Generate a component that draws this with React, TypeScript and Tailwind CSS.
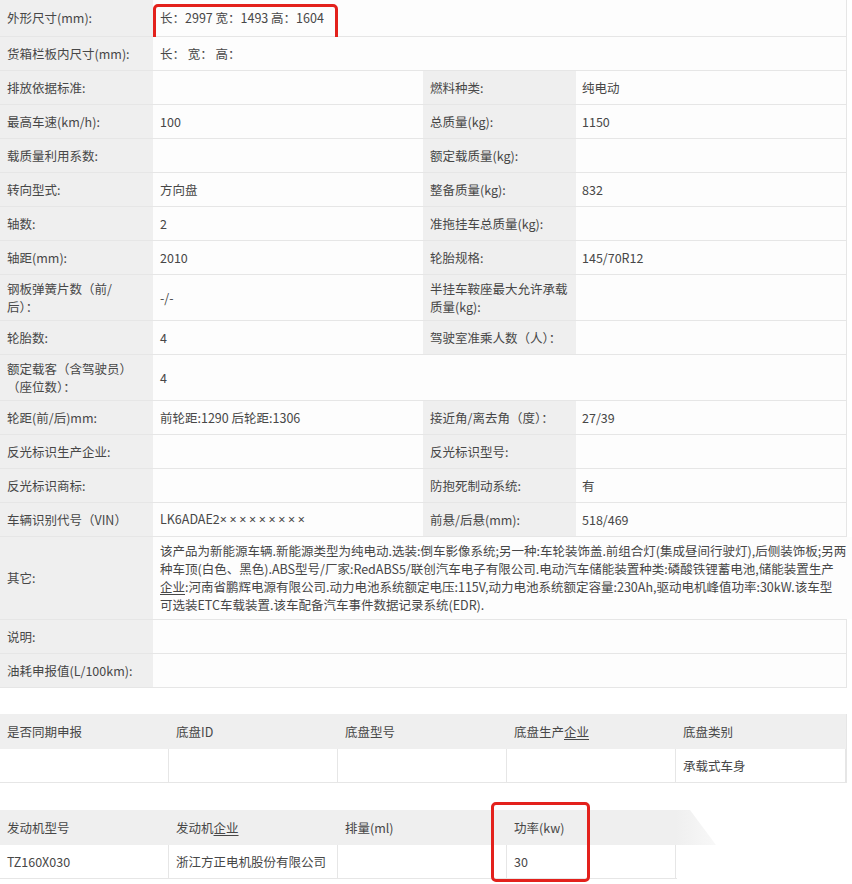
import type { ReactNode } from 'react'

type Row = {
  label: ReactNode
  value?: ReactNode
  label2?: ReactNode
  value2?: ReactNode
  span?: boolean
  mark?: boolean
  tall?: boolean
}

const U = ({ children }: { children: ReactNode }) => (
  <span className="underline underline-offset-2">{children}</span>
)

const rows: Row[] = [
  { label: '外形尺寸(mm):', value: '长：2997 宽：1493 高：1604', span: true, mark: true },
  { label: '货箱栏板内尺寸(mm):', value: '长： 宽： 高：', span: true },
  { label: '排放依据标准:', label2: '燃料种类:', value2: '纯电动' },
  { label: '最高车速(km/h):', value: '100', label2: '总质量(kg):', value2: '1150' },
  { label: '载质量利用系数:', label2: '额定载质量(kg):' },
  { label: '转向型式:', value: '方向盘', label2: '整备质量(kg):', value2: '832' },
  { label: '轴数:', value: '2', label2: '准拖挂车总质量(kg):' },
  { label: '轴距(mm):', value: '2010', label2: '轮胎规格:', value2: '145/70R12' },
  {
    label: <>钢板弹簧片数（前/<br />后）：</>,
    value: '-/-',
    label2: <>半挂车鞍座最大允许承载<br />质量(kg):</>,
  },
  { label: '轮胎数:', value: '4', label2: '驾驶室准乘人数（人）：' },
  { label: <>额定载客（含驾驶员）<br />（座位数）：</>, value: '4', span: true },
  { label: '轮距(前/后)mm:', value: '前轮距:1290 后轮距:1306', label2: '接近角/离去角（度）：', value2: '27/39' },
  { label: '反光标识生产企业:', label2: '反光标识型号:' },
  { label: '反光标识商标:', label2: '防抱死制动系统:', value2: '有' },
  {
    label: '车辆识别代号（VIN）',
    value: (
      <span>
        LK6ADAE2
        <span className="tracking-[2.6px]" style={{ fontFamily: "'Noto Sans', sans-serif" }}>
          ×××××××××
        </span>
      </span>
    ),
    label2: '前悬/后悬(mm):',
    value2: '518/469',
  },
  {
    label: '其它:',
    span: true,
    value: (
      <div className="whitespace-nowrap">
        该产品为新能源车辆.新能源类型为纯电动.选装:倒车影像系统;另一种:车轮装饰盖.前组合灯(集成昼间行驶灯),后侧装饰板;另两
        <br />
        种车顶(白色、黑色).ABS型号/厂家:RedABS5/联创汽车电子有限公司.电动汽车储能装置种类:磷酸铁锂蓄电池,储能装置生产
        <br />
        <U>企业</U>:河南省鹏辉电源有限公司.动力电池系统额定电压:115V,动力电池系统额定容量:230Ah,驱动电机峰值功率:30kW.该车型
        <br />
        可选装ETC车载装置.该车配备汽车事件数据记录系统(EDR).
      </div>
    ),
  },
  { label: '说明:', span: true },
  { label: '油耗申报值(L/100km):', span: true },
]

function MainRow({ r, first }: { r: Row; first?: boolean }) {
  return (
    <div className={'relative flex border-b border-[#e6e6e6] ' + (first ? 'min-h-[37px]' : 'min-h-[34px]')}>
      <div className="w-[153px] shrink-0 bg-[#efefef] px-[7px] py-[5px] flex items-center">
        <div className="leading-[17.5px]">{r.label}</div>
      </div>
      {r.span ? (
        <div className="flex-1 bg-[#fdfdfd] px-[7px] py-[5px] flex items-center">{r.value}</div>
      ) : (
        <>
          <div className="w-[270px] shrink-0 bg-[#fdfdfd] px-[7px] py-[5px] flex items-center">{r.value}</div>
          <div className="w-[153px] shrink-0 bg-[#efefef] px-[7px] py-[5px] flex items-center">
            <div className="leading-[17.5px]">{r.label2}</div>
          </div>
          <div className="flex-1 bg-[#fdfdfd] px-[6px] py-[5px] flex items-center">{r.value2}</div>
        </>
      )}
      {r.mark && (
        <div className="absolute left-[153px] top-[4px] w-[185px] h-[38px] border-[3px] border-[#e3211c] rounded-[5px]" />
      )}
    </div>
  )
}

function Cell({ children, head, last }: { children?: ReactNode; head?: boolean; last?: boolean }) {
  return (
    <div
      className={
        'w-[169px] shrink-0 px-[7px] flex items-center ' +
        (head ? 'h-[35px] bg-[#efefef]' : 'h-[33px] bg-white border-r border-[#e6e6e6]') +
        (last ? ' flex-1' : '')
      }
    >
      {children}
    </div>
  )
}

export default function App() {
  return (
    <div
      className="min-h-screen w-[852px] bg-white text-[12.5px] leading-[18px] text-[#474747]"
      style={{ fontFamily: "'Noto Sans CJK SC', 'Noto Sans', sans-serif" }}
    >
      {/* Main spec table */}
      <div className="w-[847px] border-r border-[#e6e6e6]">
        {rows.map((r, i) => (
          <MainRow key={i} r={r} first={i === 0} />
        ))}
      </div>

      {/* Chassis table */}
      <div className="mt-[26px] w-[847px] border-r border-b border-[#e6e6e6]">
        <div className="flex">
          <Cell head>是否同期申报</Cell>
          <Cell head>底盘ID</Cell>
          <Cell head>底盘型号</Cell>
          <Cell head>底盘生产<U>企业</U></Cell>
          <Cell head last>底盘类别</Cell>
        </div>
        <div className="flex">
          <Cell />
          <Cell />
          <Cell />
          <Cell />
          <Cell last>承载式车身</Cell>
        </div>
      </div>

      {/* Engine table */}
      <div className="relative mt-[27px] w-[847px]">
        <div className="flex">
          <Cell head>发动机型号</Cell>
          <Cell head>发动机<U>企业</U></Cell>
          <Cell head>排量(ml)</Cell>
          <Cell head>功率(kw)</Cell>
          <div className="w-[40px] h-[35px] bg-gradient-to-r from-[#efefef] to-[#f8f8f8] [clip-path:polygon(0_0,35%_0,100%_100%,0_100%)]" />
        </div>
        <div className="flex w-[677px] border-b border-[#e6e6e6]">
          <Cell>TZ160X030</Cell>
          <Cell>浙江方正电机股份有限公司</Cell>
          <Cell />
          <Cell>30</Cell>
        </div>
        <div className="absolute left-[491px] top-[-8px] w-[99px] h-[80px] border-[3px] border-[#e3211c] rounded-[5px]" />
      </div>
    </div>
  )
}
